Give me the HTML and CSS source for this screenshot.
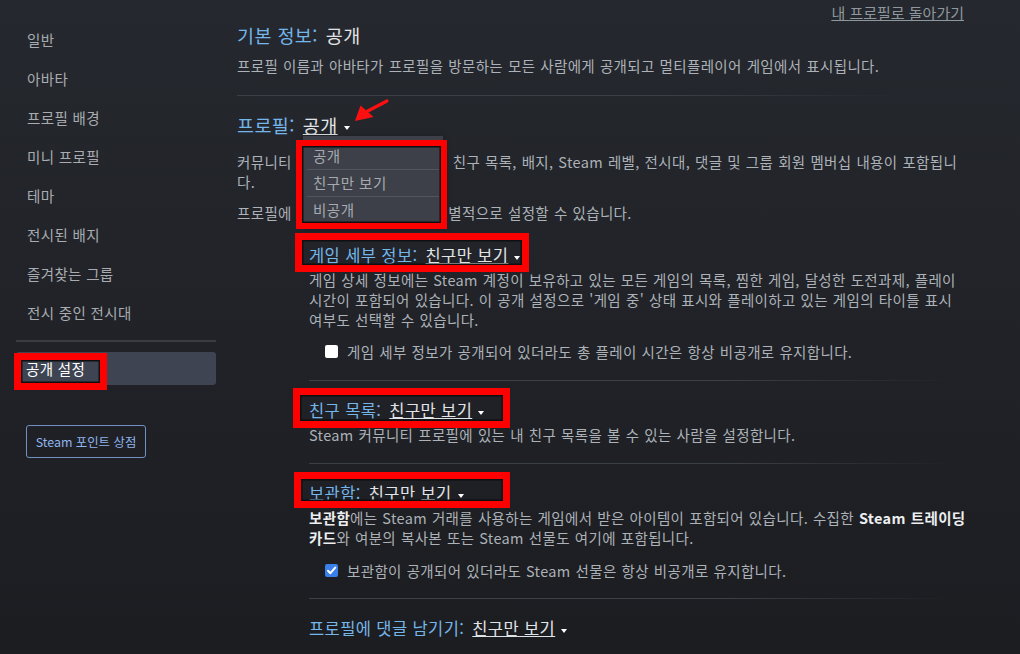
FILE: index.html
```html
<!DOCTYPE html>
<html lang="ko">
<head>
<meta charset="utf-8">
<title>공개 설정</title>
<link rel="stylesheet" href="styles.css">
</head>
<body>
<div class="page">
  <nav class="side">
    <ul class="menu">
      <li>일반</li>
      <li>아바타</li>
      <li>프로필 배경</li>
      <li>미니 프로필</li>
      <li>테마</li>
      <li>전시된 배지</li>
      <li>즐겨찾는 그룹</li>
      <li>전시 중인 전시대</li>
    </ul>
    <div class="side-rule"></div>
    <div class="active">공개 설정<span class="mark mark-side"></span></div>
    <button class="shop">Steam 포인트 상점</button>
  </nav>

  <main class="main">
    <div class="topbar"><a class="back">내 프로필로 돌아가기</a></div>

    <h2 class="head top"><span class="lbl">기본 정보:</span><span class="val">공개</span></h2>
    <p class="desc d1">프로필 이름과 아바타가 프로필을 방문하는 모든 사람에게 공개되고 멀티플레이어 게임에서 표시됩니다.</p>
    <div class="rule rule-main"></div>

    <h2 class="head top profile"><span class="lbl">프로필:</span><span class="val u">공개</span><span class="caret"></span>
      <svg class="arrow" width="42" height="30" viewBox="0 0 42 30">
        <line x1="14" y1="17" x2="37" y2="5" stroke="#ff1010" stroke-width="3.2" stroke-linecap="round"/>
        <polygon points="5,25 10.5,9.5 23.5,21" fill="#ff1010"/>
      </svg>
      <ul class="dropdown">
        <li>공개</li>
        <li>친구만 보기</li>
        <li>비공개</li>
      </ul>
      <span class="mark mark-drop"></span>
    </h2>
    <p class="desc d2">커뮤니티 프로필에는 프로필 요약, 친구 목록, 배지, Steam 레벨, 전시대, 댓글 및 그룹 회원 멤버십 내용이 포함됩니<br>다.</p>
    <p class="desc d3">프로필에 포함되는 일부 정보는 개별적으로 설정할 수 있습니다.</p>

    <div class="sub">
      <h3 class="head subh h-game"><span class="lbl">게임 세부 정보:</span><span class="val u">친구만 보기</span><span class="caret"></span><span class="mark mark-game"></span></h3>
      <p class="desc sd">게임 상세 정보에는 Steam 계정이 보유하고 있는 모든 게임의 목록, 찜한 게임, 달성한 도전과제, 플레이<br>시간이 포함되어 있습니다. 이 공개 설정으로 '게임 중' 상태 표시와 플레이하고 있는 게임의 타이틀 표시<br>여부도 선택할 수 있습니다.</p>
      <div class="check c1"><span class="box"></span>게임 세부 정보가 공개되어 있더라도 총 플레이 시간은 항상 비공개로 유지합니다.</div>
      <div class="rule rule-sub r1"></div>

      <h3 class="head subh h-friends"><span class="lbl">친구 목록:</span><span class="val u">친구만 보기</span><span class="caret"></span><span class="mark mark-friends"></span></h3>
      <p class="desc sd">Steam 커뮤니티 프로필에 있는 내 친구 목록을 볼 수 있는 사람을 설정합니다.</p>
      <div class="rule rule-sub r2"></div>

      <h3 class="head subh h-inv"><span class="lbl">보관함:</span><span class="val u">친구만 보기</span><span class="caret"></span><span class="mark mark-inv"></span></h3>
      <p class="desc sd"><b>보관함</b>에는 Steam 거래를 사용하는 게임에서 받은 아이템이 포함되어 있습니다. 수집한 <b>Steam 트레이딩</b><br><b>카드</b>와 여분의 복사본 또는 Steam 선물도 여기에 포함됩니다.</p>
      <div class="check c2"><span class="box on"><svg width="13" height="13" viewBox="0 0 13 13"><path d="M3 6.8 L5.4 9.2 L10.2 3.6" fill="none" stroke="#fff" stroke-width="2" stroke-linecap="round" stroke-linejoin="round"/></svg></span>보관함이 공개되어 있더라도 Steam 선물은 항상 비공개로 유지합니다.</div>
      <div class="rule rule-sub r3"></div>

      <h3 class="head subh h-comment"><span class="lbl">프로필에 댓글 남기기:</span><span class="val u">친구만 보기</span><span class="caret"></span></h3>
    </div>
  </main>
</div>
</body>
</html>
```

FILE: styles.css
```css
* {
  box-sizing: border-box;
  margin: 0;
  padding: 0;
}

html, body {
  width: 1020px;
  height: 654px;
}

body {
  font-family: "Noto Sans CJK KR", "Noto Sans", sans-serif;
  background: linear-gradient(180deg, #25282e 0%, #1c1d21 100%);
  color: #acb2b8;
  overflow: hidden;
}

.page {
  display: flex;
  width: 1020px;
  height: 654px;
}

/* ---------- sidebar ---------- */
.side {
  flex: none;
  width: 200px;
  margin-left: 16px;
  padding-top: 20px;
}

.menu {
  list-style: none;
}

.menu li {
  height: 39px;
  line-height: 39px;
  padding-left: 11px;
  font-size: 14.5px;
  letter-spacing: 0.35px;
  color: #a8acb1;
}

.side-rule {
  height: 2px;
  margin-top: 8px;
  background: #393c42;
}

.active {
  position: relative;
  margin-top: 10px;
  height: 33px;
  line-height: 33px;
  padding-left: 10px;
  background: #3e4451;
  border-radius: 3px;
  color: #ffffff;
  font-size: 14.5px;
  letter-spacing: 0.35px;
}

.shop {
  display: block;
  margin: 40px 0 0 10px;
  width: 120px;
  height: 33px;
  background: transparent;
  border: 1px solid #7191c4;
  border-radius: 3px;
  color: #90b5ee;
  font-family: "Noto Sans CJK KR", "Noto Sans", sans-serif;
  font-size: 12.4px;
}

/* ---------- main ---------- */
.main {
  flex: none;
  width: 727px;
  margin-left: 21px;
}

.topbar {
  display: flex;
  justify-content: flex-end;
  height: 23px;
  padding-top: 3px;
}

.back {
  font-size: 15px;
  line-height: 20px;
  color: #8f979e;
  text-decoration: underline;
  text-underline-offset: 1px;
}

.head {
  position: relative;
  font-weight: 400;
  line-height: 24px;
  height: 24px;
  white-space: nowrap;
}

.head.top {
  font-size: 18.5px;
  letter-spacing: 0.4px;
}

.head.subh {
  font-size: 16.5px;
  letter-spacing: 0.4px;
}

.lbl {
  color: #74b5ea;
}

.val {
  color: #e1e4e7;
  margin-left: 8px;
}

.val.u {
  text-decoration: underline;
  text-decoration-thickness: 1px;
}

.caret {
  display: inline-block;
  width: 0;
  height: 0;
  margin-left: 6px;
  border-left: 3.5px solid transparent;
  border-right: 3.5px solid transparent;
  border-top: 4px solid #ffffff;
  vertical-align: middle;
}

.desc {
  font-size: 14.5px;
  letter-spacing: 0.35px;
  line-height: 20px;
  word-spacing: 0.5px;
  color: #acb2b8;
  white-space: nowrap;
}

.desc b {
  color: #eceef0;
  font-weight: 700;
}

.d1 { margin-top: 9px; }
.profile { margin-top: 17px; }
.d2 { margin-top: 15px; }
.d3 { margin-top: 11px; }

.rule {
  height: 1px;
  background: linear-gradient(90deg, #3b3f46 0%, #3b3f46 65%, rgba(59, 63, 70, 0) 100%);
}

.rule-main {
  margin-top: 19px;
  width: 665px;
}

/* ---------- sub settings ---------- */
.sub {
  padding-left: 72px;
}

.h-game { margin-top: 20px; }
.sd { margin-top: 3px; }

.check {
  display: flex;
  align-items: center;
  height: 20px;
  margin-left: 16px;
  font-size: 14.5px;
  letter-spacing: 0.35px;
  word-spacing: 0.5px;
  color: #acb2b8;
  white-space: nowrap;
}

.c1 { margin-top: 11px; }
.c2 { margin-top: 12px; }

.box {
  flex: none;
  display: block;
  width: 13px;
  height: 13px;
  margin-right: 9px;
  background: #ffffff;
  border-radius: 2px;
}

.box.on {
  background: #3a80ea;
}

.box svg {
  display: block;
}

.rule-sub {
  width: 645px;
}

.r1 { margin-top: 19px; }
.r2 { margin-top: 18px; }
.r3 { margin-top: 18px; }

.h-friends,
.h-inv,
.h-comment {
  margin-top: 17px;
}

/* ---------- dropdown (open menu) ---------- */
.dropdown {
  position: absolute;
  left: 66px;
  top: 23px;
  z-index: 5;
  width: 140px;
  padding-top: 6px;
  list-style: none;
  background: #3d4049;
  box-shadow: 0 3px 8px rgba(0, 0, 0, 0.45);
  letter-spacing: 0.5px;
}

.dropdown li {
  position: relative;
  height: 27px;
  line-height: 27px;
  padding-left: 10px;
  font-size: 14.5px;
  color: #a6aab0;
}

.dropdown li + li::before {
  content: "";
  position: absolute;
  left: 4px;
  right: 4px;
  top: 0;
  height: 1px;
  background: #52555d;
}

.arrow {
  position: absolute;
  left: 113px;
  top: -17px;
  z-index: 7;
}

/* ---------- red annotation frames ---------- */
.mark {
  position: absolute;
  z-index: 6;
  border: 7px solid #ff0000;
  box-shadow: inset 0 0 0 1.5px #0e0f11;
  pointer-events: none;
}

.mark-drop {
  left: 59px;
  top: 27px;
  width: 151px;
  height: 89px;
  border-width: 6px;
}

.mark-side {
  left: -2px;
  top: 1px;
  width: 93px;
  height: 37px;
}

.mark-game {
  left: -14px;
  top: -10px;
  width: 234px;
  height: 39px;
}

.mark-friends {
  left: -16px;
  top: -10px;
  width: 217px;
  height: 40px;
}

.mark-inv {
  left: -15px;
  top: -9px;
  width: 216px;
  height: 36px;
}
```
